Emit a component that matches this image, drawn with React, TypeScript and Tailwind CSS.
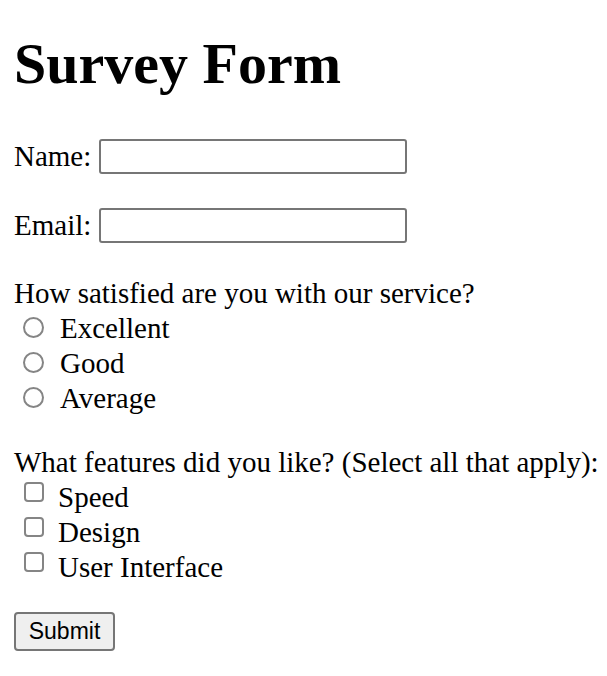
export default function App() {
  const serif = { fontFamily: '"Liberation Serif", "Times New Roman", serif' };
  const radios = ["Excellent", "Good", "Average"];
  const checks = ["Speed", "Design", "User Interface"];

  return (
    <div className="min-h-screen bg-white px-[14px] text-[29px] text-black" style={serif}>
      <h1 className="pt-[32px] text-[58px] font-bold leading-[64px]">Survey Form</h1>

      <form className="flex flex-col" onSubmit={(e) => e.preventDefault()}>
        <div className="mt-[43px] flex h-[35px] items-center gap-[8px]">
          <label className="leading-[35px]">Name:</label>
          <input
            type="text"
            className="h-[35px] w-[308px] rounded-[3px] border-2 border-[#767676] bg-white px-1 outline-none"
          />
        </div>

        <div className="mt-[34px] flex h-[35px] items-center gap-[8px]">
          <label className="leading-[35px]">Email:</label>
          <input
            type="email"
            className="h-[35px] w-[308px] rounded-[3px] border-2 border-[#767676] bg-white px-1 outline-none"
          />
        </div>

        <p className="mt-[33px] h-[35px] whitespace-nowrap leading-[35px]">How satisfied are you with our service?</p>
        {radios.map((r) => (
          <label key={r} className="flex h-[35px] items-center">
            <input
              type="radio"
              name="satisfaction"
              className="mb-[3px] ml-[9px] mr-[16px] h-[21px] w-[21px] appearance-none rounded-full border-2 border-[#858585] bg-white"
            />
            <span className="leading-[35px]">{r}</span>
          </label>
        ))}

        <p className="mt-[29px] h-[35px] whitespace-nowrap leading-[35px]">
          What features did you like? (Select all that apply):
        </p>
        {checks.map((c) => (
          <label key={c} className="flex h-[35px] items-center">
            <input
              type="checkbox"
              className="mb-[11px] ml-[10px] mr-[14px] h-[20px] w-[20px] appearance-none rounded-[4px] border-2 border-[#858585] bg-white"
            />
            <span className="leading-[35px]">{c}</span>
          </label>
        ))}

        <div className="mt-[23px]">
          <button
            type="submit"
            className="h-[39px] w-[101px] rounded-[4px] border-2 border-[#767676] bg-[#efefef] text-[23px] leading-none text-black"
            style={{ fontFamily: '"Liberation Sans", Arial, sans-serif' }}
          >
            Submit
          </button>
        </div>
      </form>
    </div>
  );
}
